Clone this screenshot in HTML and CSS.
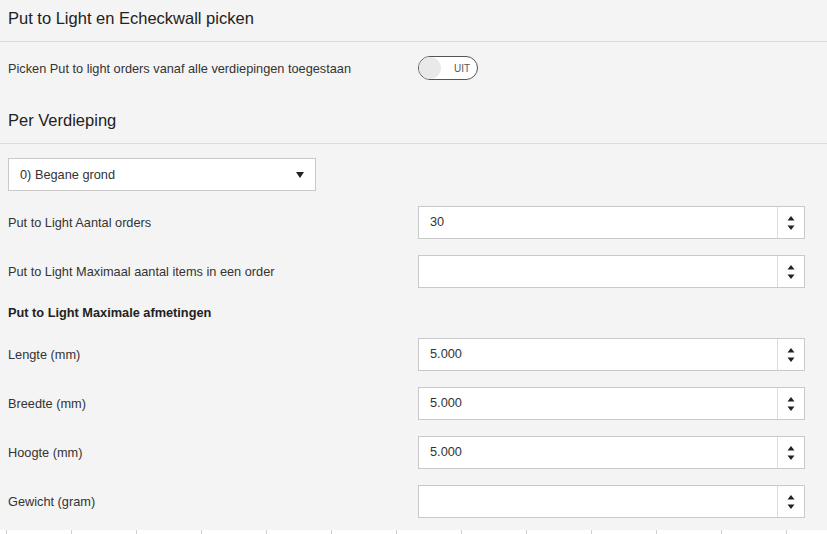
FILE: index.html
```html
<!DOCTYPE html>
<html lang="nl">
<head>
<meta charset="utf-8">
<title>Put to Light en Echeckwall picken</title>
<link rel="stylesheet" href="styles.css">
</head>
<body>
<div class="page">
  <div class="section-head first"><h2>Put to Light en Echeckwall picken</h2></div>
  <div class="toggle-row">
    <span class="label">Picken Put to light orders vanaf alle verdiepingen toegestaan</span>
    <div class="toggle"><span class="knob"></span><span class="toggle-text">UIT</span></div>
  </div>
  <div class="section-head second"><h2>Per Verdieping</h2></div>

  <div class="select">
    <span>0) Begane grond</span>
    <svg class="caret" width="8" height="6" viewBox="0 0 8 6"><path d="M0 0H8L4 6Z" fill="#222"/></svg>
  </div>

  <div class="form">
    <div class="label">Put to Light Aantal orders</div>
    <div class="num"><span class="val">30</span><span class="spin"><svg width="8" height="16" viewBox="0 0 8 16"><path d="M4 1L7.5 5.5H0.5Z M0.5 10.5H7.5L4 15Z" fill="#222"/></svg></span></div>

    <div class="label">Put to Light Maximaal aantal items in een order</div>
    <div class="num"><span class="val"></span><span class="spin"><svg width="8" height="16" viewBox="0 0 8 16"><path d="M4 1L7.5 5.5H0.5Z M0.5 10.5H7.5L4 15Z" fill="#222"/></svg></span></div>

    <div class="label bold">Put to Light Maximale afmetingen</div>

    <div class="label">Lengte (mm)</div>
    <div class="num"><span class="val">5.000</span><span class="spin"><svg width="8" height="16" viewBox="0 0 8 16"><path d="M4 1L7.5 5.5H0.5Z M0.5 10.5H7.5L4 15Z" fill="#222"/></svg></span></div>

    <div class="label">Breedte (mm)</div>
    <div class="num"><span class="val">5.000</span><span class="spin"><svg width="8" height="16" viewBox="0 0 8 16"><path d="M4 1L7.5 5.5H0.5Z M0.5 10.5H7.5L4 15Z" fill="#222"/></svg></span></div>

    <div class="label">Hoogte (mm)</div>
    <div class="num"><span class="val">5.000</span><span class="spin"><svg width="8" height="16" viewBox="0 0 8 16"><path d="M4 1L7.5 5.5H0.5Z M0.5 10.5H7.5L4 15Z" fill="#222"/></svg></span></div>

    <div class="label">Gewicht (gram)</div>
    <div class="num"><span class="val"></span><span class="spin"><svg width="8" height="16" viewBox="0 0 8 16"><path d="M4 1L7.5 5.5H0.5Z M0.5 10.5H7.5L4 15Z" fill="#222"/></svg></span></div>
  </div>

  <div class="table-top">
    <div class="cell"></div><div class="cell"></div><div class="cell"></div><div class="cell"></div>
    <div class="cell"></div><div class="cell"></div><div class="cell"></div><div class="cell"></div>
    <div class="cell"></div><div class="cell"></div><div class="cell"></div><div class="cell"></div>
    <div class="cell"></div>
  </div>
</div>
</body>
</html>
```

FILE: styles.css
```css
html, body {
  margin: 0;
  padding: 0;
  background: #f4f4f4;
  font-family: "Liberation Sans", Arial, sans-serif;
  color: #333;
  overflow: hidden;
}

.page {
  width: 827px;
  height: 534px;
  overflow: hidden;
}

.section-head {
  border-bottom: 1px solid #dcdcdc;
  padding: 0 8px;
}

.section-head h2 {
  margin: 0;
  font-weight: normal;
  font-size: 16.5px;
  line-height: 36px;
  color: #222;
}

.section-head.first {
  height: 41px;
}

.section-head.second {
  height: 40px;
  margin-top: 23px;
}

.section-head.second h2 {
  line-height: 34px;
}

.toggle-row {
  display: grid;
  grid-template-columns: 410px auto;
  align-items: center;
  padding: 14px 0 0 8px;
}

.label {
  font-size: 12.75px;
  color: #333;
}

.toggle {
  width: 58px;
  height: 22px;
  border: 1px solid #555;
  border-radius: 12px;
  background: #fff;
  display: flex;
  align-items: center;
}

.knob {
  width: 22px;
  height: 22px;
  border-radius: 50%;
  background: #e9e9e9;
}

.toggle-text {
  margin-left: 13px;
  font-size: 10px;
  color: #555;
}

.select {
  margin: 14px 0 0 8px;
  width: 284px;
  height: 30px;
  border: 1px solid #c9c9c9;
  background: #fff;
  display: flex;
  align-items: center;
  justify-content: space-between;
  padding: 0 11px 1px 11px;
  font-size: 12.75px;
  color: #333;
}

.caret {
  display: block;
  margin-top: 1px;
}

.form {
  display: grid;
  grid-template-columns: 410px 387px;
  row-gap: 16px;
  align-items: center;
  padding-left: 8px;
  margin-top: 15px;
}

.form .label.bold {
  grid-column: 1 / span 2;
  font-weight: bold;
  height: 18px;
  line-height: 18px;
  color: #222;
}

.num {
  height: 31px;
  border: 1px solid #c9c9c9;
  background: #fff;
  display: flex;
  align-items: stretch;
}

.val {
  flex: 1;
  padding-left: 11px;
  font-size: 12.75px;
  line-height: 30px;
  color: #333;
}

.spin {
  width: 26px;
  border-left: 1px solid #dcdcdc;
  display: flex;
  align-items: center;
  justify-content: center;
}

.spin svg {
  display: block;
}

.table-top {
  margin-top: 12px;
  height: 20px;
  background: #fff;
  display: flex;
  padding-left: 6px;
}

.cell {
  flex: 0 0 64px;
  border-left: 1px solid #cfcfcf;
}
```
